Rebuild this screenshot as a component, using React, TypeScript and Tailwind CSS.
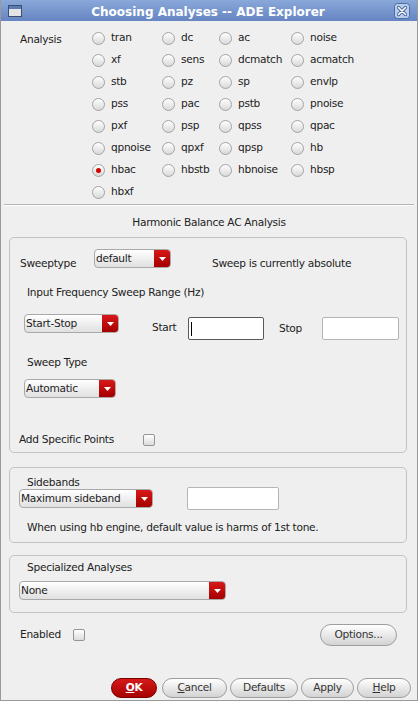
import React from "react";

const rows: { label: string; checked?: boolean }[][] = [
  [{ label: "tran" }, { label: "dc" }, { label: "ac" }, { label: "noise" }],
  [{ label: "xf" }, { label: "sens" }, { label: "dcmatch" }, { label: "acmatch" }],
  [{ label: "stb" }, { label: "pz" }, { label: "sp" }, { label: "envlp" }],
  [{ label: "pss" }, { label: "pac" }, { label: "pstb" }, { label: "pnoise" }],
  [{ label: "pxf" }, { label: "psp" }, { label: "qpss" }, { label: "qpac" }],
  [{ label: "qpnoise" }, { label: "qpxf" }, { label: "qpsp" }, { label: "hb" }],
  [{ label: "hbac", checked: true }, { label: "hbstb" }, { label: "hbnoise" }, { label: "hbsp" }],
  [{ label: "hbxf" }],
];

function Radio({ label, checked }: { label: string; checked?: boolean }) {
  return (
    <div className="flex h-[22px] items-center gap-[6px]">
      <span className="flex h-[13px] w-[13px] items-center justify-center rounded-full border border-[#a3a3a3] bg-linear-to-b from-white to-[#d9d9d9]">
        {checked && <span className="h-[5px] w-[5px] rounded-full bg-[#d30000]" />}
      </span>
      <span>{label}</span>
    </div>
  );
}

function Combo({ value, className }: { value: string; className: string }) {
  return (
    <div
      className={`flex h-[19px] overflow-hidden rounded-[4px] border border-[#a9a9a9] bg-linear-to-b from-white to-[#e0e0e0] ${className}`}
    >
      <span className="flex-1 pl-[1px] leading-[17px]">{value}</span>
      <span className="flex w-[16px] items-center justify-center bg-linear-to-b from-[#d81818] to-[#a40000]">
        <svg width="7" height="4" viewBox="0 0 7 4">
          <path d="M0 0h7L3.5 4z" fill="#fff" />
        </svg>
      </span>
    </div>
  );
}

function Checkbox() {
  return (
    <span className="h-[12px] w-[12px] rounded-[2px] border border-[#959595] bg-linear-to-b from-white to-[#dcdcdc]" />
  );
}

function Button({ children, className }: { children: React.ReactNode; className: string }) {
  return (
    <div
      className={`flex items-center justify-center rounded-full border border-[#9d9d9d] bg-linear-to-b from-white to-[#d3d3d3] text-[#333] ${className}`}
    >
      {children}
    </div>
  );
}

export default function App() {
  return (
    <div className="h-[701px] w-[418px] overflow-hidden border-x border-b border-[#9a9a9a] bg-[#efefef] font-['DejaVu_Sans',sans-serif] text-[10.6px] tracking-[-0.28px] text-[#222]">
      {/* title bar */}
      <div className="flex h-[21px] items-center bg-linear-to-b from-[#8aa8d9] to-[#6685c2] px-[7px] tracking-normal">
        <svg width="14" height="12" viewBox="0 0 14 12">
          <rect x="0.5" y="0.5" width="13" height="11" fill="#e4e4e4" stroke="#3e4f6e" />
          <rect x="1" y="1" width="12" height="3" fill="#5b7bb5" />
        </svg>
        <span className="mt-[2px] flex-1 text-center text-[12px] font-bold leading-[16px] text-white">
          Choosing Analyses -- ADE Explorer
        </span>
        <svg width="16" height="16" viewBox="0 0 16 16">
          <rect x="0.5" y="0.5" width="15" height="15" rx="3" fill="#b9cdec" stroke="#4a6ca5" />
          <path d="M4.5 4.5l7 7M11.5 4.5l-7 7" stroke="#3f5f96" strokeWidth="3.2" strokeLinecap="round" />
          <path d="M4.5 4.5l7 7M11.5 4.5l-7 7" stroke="#fff" strokeWidth="1.6" strokeLinecap="round" />
        </svg>
      </div>

      {/* analysis choices */}
      <div className="flex pl-[19px] pt-[6px]">
        <span className="mt-[4px] w-[72px] leading-[16px]">Analysis</span>
        <div className="grid grid-cols-[70px_57px_72px_auto]">
          {rows.map((row, i) =>
            row.map((r) => <Radio key={`${i}-${r.label}`} label={r.label} checked={r.checked} />),
          )}
        </div>
      </div>
      <div className="mx-[3px] mt-[1px] h-[2px] border-t border-b border-t-[#b3b3b3] border-b-white" />
      <div className="mt-[6px] text-center leading-[20px]">Harmonic Balance AC Analysis</div>

      {/* sweep group */}
      <div className="ml-[8px] mr-[10px] mt-[5px] rounded-[5px] border border-[#c2c2c2] pb-[4px] pl-[9px]">
        <div className="mt-[11px] flex h-[19px] items-start">
          <span className="ml-[1px] mt-[6px] w-[74px] leading-[16px]">Sweeptype</span>
          <Combo value="default" className="w-[77px]" />
          <span className="ml-[41px] mt-[6px] leading-[16px]">Sweep is currently absolute</span>
        </div>
        <div className="ml-[8px] mt-[16px] leading-[16px]">Input Frequency Sweep Range (Hz)</div>
        <div className="mt-[14px] flex h-[26px] items-start">
          <Combo value="Start-Stop" className="ml-[5px] w-[95px]" />
          <span className="ml-[33px] mt-[5px] w-[36px] leading-[16px]">Start</span>
          <div className="mt-[3px] flex h-[23px] w-[76px] items-center rounded-[2px] border border-[#5a5a5a] bg-white pl-[2px]">
            <span className="h-[14px] w-px bg-black" />
          </div>
          <span className="ml-[15px] mt-[6px] w-[43px] leading-[16px]">Stop</span>
          <div className="mt-[3px] h-[23px] w-[77px] rounded-[2px] border border-[#b5b5b5] bg-white" />
        </div>
        <div className="ml-[8px] mt-[14px] leading-[16px]">Sweep Type</div>
        <Combo value="Automatic" className="ml-[5px] mt-[9px] w-[92px]" />
        <div className="mt-[34px] flex h-[16px] items-center">
          <span className="w-[124px]">Add Specific Points</span>
          <Checkbox />
        </div>
      </div>

      {/* sidebands group */}
      <div className="ml-[8px] mr-[10px] mt-[14px] rounded-[5px] border border-[#c2c2c2] pb-[7px] pl-[9px]">
        <div className="ml-[8px] mt-[8px] leading-[13px]">Sidebands</div>
        <div className="-mt-[2px] flex h-[23px] items-center">
          <Combo value="Maximum sideband" className="w-[134px]" />
          <div className="ml-[34px] h-[23px] w-[92px] rounded-[2px] border border-[#b5b5b5] bg-white" />
        </div>
        <div className="ml-[8px] mt-[9px] leading-[16px]">
          When using hb engine, default value is harms of 1st tone.
        </div>
      </div>

      {/* specialized group */}
      <div className="ml-[8px] mr-[10px] mt-[12px] rounded-[5px] border border-[#c2c2c2] pb-[12px] pl-[9px]">
        <div className="ml-[8px] mt-[4px] leading-[14px]">Specialized Analyses</div>
        <Combo value="None" className="mt-[7px] w-[207px]" />
      </div>

      {/* enabled / options */}
      <div className="mt-[11px] flex h-[22px] items-center pl-[19px] pr-[20px]">
        <span className="w-[53px]">Enabled</span>
        <Checkbox />
        <Button className="ml-auto h-[22px] w-[77px] rounded-[9px]">Options...</Button>
      </div>

      {/* dialog buttons */}
      <div className="mt-[32px] flex h-[20px] justify-end pr-[6px]">
        <div className="flex w-[46px] items-center justify-center rounded-full border border-[#7a0000] bg-linear-to-b from-[#d51a1a] to-[#a80000] font-bold text-white">
          <span>
            <span className="underline">O</span>K
          </span>
        </div>
        <Button className="ml-[5px] w-[65px]">
          <span>
            <span className="underline">C</span>ancel
          </span>
        </Button>
        <Button className="ml-[3px] w-[68px]">Defaults</Button>
        <Button className="ml-[3px] w-[53px]">Apply</Button>
        <Button className="ml-[3px] w-[54px]">
          <span>
            <span className="underline">H</span>elp
          </span>
        </Button>
      </div>
    </div>
  );
}
